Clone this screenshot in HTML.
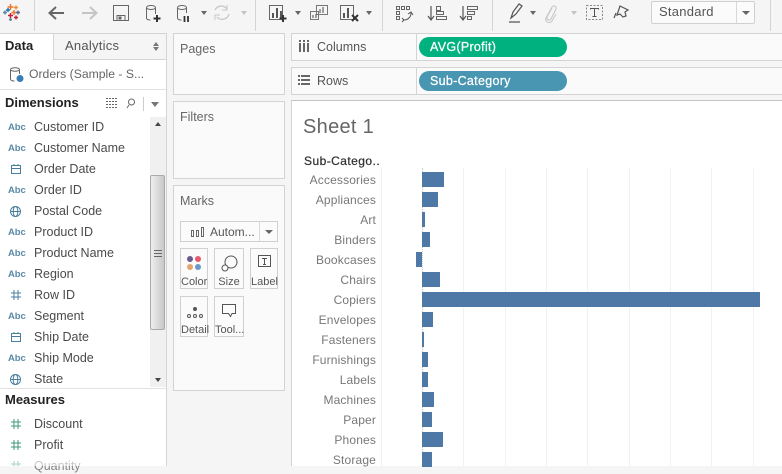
<!DOCTYPE html>
<html><head><meta charset="utf-8"><style>
html,body{margin:0;padding:0}
html{background:#f5f5f5}
body{width:782px;height:466px;overflow:hidden;position:relative;background:#f5f5f5;font-family:"Liberation Sans",sans-serif;color:#555}
div,span,svg{position:absolute;box-sizing:border-box}
.t{white-space:nowrap;font-size:12.5px;line-height:16px;letter-spacing:0}
.p{background:#fafafa;border:1px solid #d4d4d4}
.f{left:34px;color:#4a4a4a}
.ab{left:8px;font-size:9.5px;font-weight:bold;color:#5a8aa5;line-height:12px;white-space:nowrap;letter-spacing:-.1px}
.sep{width:1px;background:#d4d4d4;top:0;height:31px}
.btn{background:#fbfbfb;border:1px solid #d0d0d0}
.lbl{font-size:11px;color:#555;white-space:nowrap;text-align:center;left:0;right:0;line-height:13px;letter-spacing:0}
.r{white-space:nowrap;font-size:12px;color:#777;right:406px;line-height:14px;letter-spacing:.15px}
.b{background:#4e79a7;height:15px}
.g{background:#f1f1f1;width:1px;top:168px;height:298px}
.d{width:0;height:0;border-left:3px solid transparent;border-right:3px solid transparent;border-top:4px solid #666}
.dl{border-top-color:#c4c4c4}
.pill{width:148px;height:20px;border-radius:10px;color:#fff;padding-left:11px;line-height:20px;font-size:12.5px;letter-spacing:.3px;-webkit-text-stroke:.25px #fff}
</style></head><body>

<!-- toolbar -->
<svg style="left:0;top:0" width="782" height="32" fill="none">
<g stroke-width="1.4">
<g stroke="#e8762c"><path d="M10.500 4v6M7.500 7h6"/></g>
<path d="M10.500 13v5M8 15.500h5" stroke="#c72035"/>
<path d="M5 10.500v4M3 12.500h4" stroke="#5b879b"/>
<path d="M16 5.500v4M14 7.500h4" stroke="#eb912b"/>
<path d="M16 15.500v4M14 17.500h4" stroke="#c72035"/>
<path d="M14 10v5M11.500 12.500h5" stroke="#e8762c"/>
<path d="M18 10.500v4M16 12.500h4" stroke="#5b6591"/>
<path d="M8 8v4M6 10h4" stroke="#1f77b4"/>
<path d="M10.500 18v3M9 19.500h3" stroke="#5b879b"/>
</g>
<path d="M64 13H50m6-6-6.500 6 6.500 6" stroke="#666" stroke-width="2"/>
<path d="M82 13h14m-6-6 6.500 6-6.500 6" stroke="#c4c4c4" stroke-width="2"/>
<path d="M113.500 5.500h15v15h-15zM117 20.500v-5h8v5" stroke="#666" stroke-width="1"/>
<rect x="118.500" y="16.500" width="3" height="3" fill="#666"/>
<ellipse cx="151" cy="7.500" rx="4.500" ry="2" stroke="#666"/><path d="M146.500 8v10c0 1.500 2 2 4 2M155.500 8v6" stroke="#666"/>
<path d="M157 15v7M153.500 18.500h7" stroke="#333" stroke-width="2"/>
<ellipse cx="182" cy="7.500" rx="4.500" ry="2" stroke="#666"/><path d="M177.500 8v10c0 1.500 2 2 4 2M186.500 8v5" stroke="#666"/>
<path d="M184.500 16v6M188 16v6" stroke="#333" stroke-width="1.800"/>
<path d="M215 10a7 7 0 0 1 12-1M229 14a7 7 0 0 1-12 3" stroke="#c8c8c8" stroke-width="1.300"/><path d="M227 5v5h-5M215 20v-5h5" stroke="#c8c8c8"/>
<path d="M269.500 5.500h13v14h-13z" stroke="#666"/><path d="M273 18v-5M277 18V8M281 18v-7" stroke="#555" stroke-width="2"/>
<path d="M283 15v7M279.500 18.500h7" stroke="#333" stroke-width="2"/>
<path d="M316.500 5.500h11v9h-11zM310.500 11.500h8v8h-8z" stroke="#777"/><path d="M320 13v-4M323 13V7M313 18v-3M316 18v-4" stroke="#666" stroke-width="1.200"/>
<path d="M340.500 5.500h13v14h-13z" stroke="#666"/><path d="M344 18v-5M348 18V8" stroke="#555" stroke-width="2"/>
<path d="M352 15l6 6m0-6-6 6" stroke="#333" stroke-width="2"/>
<path d="M396.500 6.500h3v3h-3zM401.500 6.500h3v3h-3zM406.500 6.500h3v3h-3zM396.500 11.500h3v3h-3zM396.500 16.500h3v3h-3z" stroke="#666"/>
<path d="M411 13c0 4-3 7-7 7M408 14l3-2 2 3M402 18l2 2-2 2" stroke="#555"/>
<path d="M431 6v13M428 16l3 4 3-4" stroke="#555" stroke-width="1.200"/><path d="M436.500 6.500h4v4h-4zM436.500 11.500h7v3h-7zM436.500 16.500h10v3h-10z" stroke="#666"/>
<path d="M463 6v13M460 16l3 4 3-4" stroke="#555" stroke-width="1.200"/><path d="M467.500 6.500h10v3h-10zM467.500 11.500h7v3h-7zM467.500 16.500h4v3h-4z" stroke="#666"/>
<path d="M511 18l2-6 6-8 3 2-6 8zM509 22h11" stroke="#555" stroke-width="1.200"/>
<path d="M552 8l-5 9c-1 3 3 4 4 2l5-10c1-3-3-4-4-2l-6 11c-2 4 4 6 6 3l4-7" stroke="#c8c8c8" stroke-width="1.100"/>
<rect x="586.500" y="5.500" width="16" height="14" stroke="#888" stroke-dasharray="2 1.500"/>
<path d="M590.500 9.500v-1h8v1M594.500 8.500v8M592.500 16.500h4" stroke="#555"/>
<path d="M620 6l8 4-3 2 1 4-3 1-3-3-3 1zM616 13l-2 5" stroke="#555" stroke-width="1.200"/>
</svg>
<div class="sep" style="left:34px"></div>
<div class="sep" style="left:255px"></div>
<div class="sep" style="left:382px"></div>
<div class="sep" style="left:492px"></div>
<div class="sep" style="left:770px"></div>
<div class="d" style="left:201px;top:11px"></div>
<div class="d dl" style="left:241px;top:11px"></div>
<div class="d" style="left:295px;top:11px"></div>
<div class="d" style="left:366px;top:11px"></div>
<div class="d" style="left:530px;top:11px"></div>
<div class="d dl" style="left:571px;top:11px"></div>
<div class="btn" style="left:651px;top:1px;width:104px;height:23px;border-radius:2px"></div>
<div style="left:736px;top:2px;width:1px;height:21px;background:#d8d8d8"></div>
<div class="t" style="left:659px;top:4px;font-size:13px;color:#555;letter-spacing:.25px">Standard</div>
<div class="d" style="left:742px;top:11px;border-left-width:4px;border-right-width:4px;border-top-width:4px"></div>

<!-- left panel -->
<div style="left:0;top:33px;width:167px;height:433px;background:#fff;border-top:1px solid #d4d4d4;border-right:1px solid #d4d4d4"></div>
<div style="left:53px;top:34px;width:113px;height:26px;background:#f5f5f5;border-left:1px solid #d4d4d4;border-bottom:1px solid #d4d4d4"></div>
<div class="t" style="left:5px;top:38px;font-weight:bold;color:#222;font-size:13px">Data</div>
<div class="t" style="left:65px;top:38px;font-size:13px;color:#555;letter-spacing:.25px">Analytics</div>
<div style="left:153px;top:42px;width:0;height:0;border-left:3px solid transparent;border-right:3px solid transparent;border-bottom:4px solid #777"></div>
<div style="left:153px;top:47px;width:0;height:0;border-left:3px solid transparent;border-right:3px solid transparent;border-top:4px solid #777"></div>
<svg style="left:9px;top:67px" width="16" height="16" fill="none"><ellipse cx="6" cy="2.500" rx="4.500" ry="1.800" stroke="#666"/><path d="M1.500 3v9c0 1.500 2 2 4 2M10.500 3v4" stroke="#666"/><circle cx="11" cy="11.500" r="3.500" fill="#3a7cb5"/></svg>
<div class="t" style="left:29px;top:66px;color:#666;font-size:12.2px">Orders (Sample - S...</div>
<div style="left:0;top:89px;width:166px;height:1px;background:#e2e2e2"></div>
<div class="t" style="left:5px;top:95px;font-weight:bold;color:#222;font-size:13px">Dimensions</div>
<svg style="left:105px;top:97px" width="48" height="14" fill="none"><path d="M1 1.500h12M1 4.500h12M1 7.500h12M1 10.500h12" stroke="#666" stroke-dasharray="2 1"/><circle cx="26.500" cy="5" r="3" stroke="#666"/><path d="M24 8l-2 3" stroke="#666"/><path d="M38.500 0v14" stroke="#ccc"/></svg>
<div class="d" style="left:151px;top:102px;border-left-width:4px;border-right-width:4px;border-top-width:5px;border-top-color:#777"></div>

<!-- scrollbar -->
<div style="left:150px;top:117px;width:16px;height:270px;background:#f0f0f0"></div>
<div style="left:150px;top:175px;width:15px;height:155px;background:linear-gradient(90deg,#eee,#c8c8c8);border:1px solid #aaa;border-radius:2px"></div>
<div style="left:154px;top:250px;width:8px;height:7px;border-top:1px solid #666;border-bottom:1px solid #666"></div>
<div style="left:154px;top:253px;width:8px;height:1px;background:#666"></div>
<div style="left:155px;top:122px;width:0;height:0;border-left:3.500px solid transparent;border-right:3.500px solid transparent;border-bottom:4px solid #444"></div>
<div class="d" style="left:155px;top:378px;border-left-width:3.500px;border-right-width:3.500px;border-top-color:#444"></div>

<div class="ab" style="top:122px">Abc</div><div class="t f" style="top:119px">Customer ID</div>
<div class="ab" style="top:143px">Abc</div><div class="t f" style="top:140px">Customer Name</div>
<svg style="left:10px;top:163px" width="12" height="12" fill="none" stroke="#4a7f9c"><rect x="1.500" y="2.500" width="9" height="8"/><path d="M1.500 5.500h9M4 1v2M8 1v2"/></svg><div class="t f" style="top:161px">Order Date</div>
<div class="ab" style="top:185px">Abc</div><div class="t f" style="top:182px">Order ID</div>
<svg style="left:9px;top:205px" width="13" height="13" fill="none" stroke="#4a7f9c"><circle cx="6.500" cy="6.500" r="5"/><ellipse cx="6.500" cy="6.500" rx="2.300" ry="5"/><path d="M1.500 6.500h10"/></svg><div class="t f" style="top:203px">Postal Code</div>
<div class="ab" style="top:227px">Abc</div><div class="t f" style="top:224px">Product ID</div>
<div class="ab" style="top:248px">Abc</div><div class="t f" style="top:245px">Product Name</div>
<div class="ab" style="top:269px">Abc</div><div class="t f" style="top:266px">Region</div>
<svg style="left:10px;top:289px" width="12" height="12" fill="none" stroke="#4a7f9c"><path d="M1 4h10M1 8h10M4 1v10M8 1v10"/></svg><div class="t f" style="top:287px">Row ID</div>
<div class="ab" style="top:311px">Abc</div><div class="t f" style="top:308px">Segment</div>
<svg style="left:10px;top:331px" width="12" height="12" fill="none" stroke="#4a7f9c"><rect x="1.500" y="2.500" width="9" height="8"/><path d="M1.500 5.500h9M4 1v2M8 1v2"/></svg><div class="t f" style="top:329px">Ship Date</div>
<div class="ab" style="top:353px">Abc</div><div class="t f" style="top:350px">Ship Mode</div>
<svg style="left:9px;top:373px" width="13" height="13" fill="none" stroke="#4a7f9c"><circle cx="6.500" cy="6.500" r="5"/><ellipse cx="6.500" cy="6.500" rx="2.300" ry="5"/><path d="M1.500 6.500h10"/></svg><div class="t f" style="top:371px">State</div>

<div style="left:0;top:388px;width:166px;height:1px;background:#e2e2e2"></div>
<div class="t" style="left:5px;top:392px;font-weight:bold;color:#222;font-size:13px">Measures</div>
<svg style="left:10px;top:418px" width="12" height="12" fill="none" stroke="#3f9a78"><path d="M1 4h10M1 8h10M4 1v10M8 1v10"/></svg><div class="t f" style="top:416px">Discount</div>
<svg style="left:10px;top:439px" width="12" height="12" fill="none" stroke="#3f9a78"><path d="M1 4h10M1 8h10M4 1v10M8 1v10"/></svg><div class="t f" style="top:437px">Profit</div>
<svg style="left:10px;top:460px" width="12" height="6" fill="none" stroke="#3f9a78"><path d="M1 4h10M4 1v10M8 1v10"/></svg><div class="t f" style="top:458px;color:#888">Quantity</div>
<div style="left:0;top:460px;width:166px;height:6px;background:rgba(255,255,255,.55)"></div>

<!-- cards -->
<div class="p" style="left:173px;top:33px;width:112px;height:62px"></div>
<div class="t" style="left:180px;top:41px;color:#666">Pages</div>
<div class="p" style="left:173px;top:101px;width:112px;height:78px"></div>
<div class="t" style="left:180px;top:109px;color:#666">Filters</div>
<div class="p" style="left:173px;top:185px;width:112px;height:206px"></div>
<div class="t" style="left:180px;top:193px;color:#666">Marks</div>
<div class="btn" style="left:180px;top:221px;width:98px;height:21px"></div>
<div style="left:259px;top:222px;width:1px;height:19px;background:#d8d8d8"></div>
<svg style="left:190px;top:226px" width="16" height="12" fill="none" stroke="#666"><rect x="1.500" y="4.500" width="2" height="6"/><rect x="6.500" y="4.500" width="2" height="6"/><rect x="11.500" y="1.500" width="2" height="9"/></svg>
<div class="t" style="left:210px;top:224px;font-size:12px;color:#555">Autom...</div>
<div class="d" style="left:265px;top:230px;border-left-width:4px;border-right-width:4px;border-top-width:4px"></div>

<div class="btn" style="left:180px;top:248px;width:28px;height:41px"><svg style="left:4px;top:5px" width="20" height="20"><circle cx="5" cy="5" r="3" fill="#6b5a8e"/><circle cx="13" cy="5" r="3" fill="#e8596b"/><circle cx="5" cy="13" r="3" fill="#e3a46f"/><circle cx="13" cy="13" r="3" fill="#6b97c9"/></svg><div class="lbl" style="top:27px">Color</div></div>
<div class="btn" style="left:214px;top:248px;width:30px;height:41px"><svg style="left:5px;top:5px" width="20" height="20" fill="none" stroke="#555"><circle cx="11" cy="8" r="6"/><circle cx="5" cy="14" r="3" fill="#fbfbfb"/></svg><div class="lbl" style="top:27px">Size</div></div>
<div class="btn" style="left:250px;top:248px;width:28px;height:41px"><svg style="left:6px;top:4px" width="16" height="16" fill="none"><rect x="1.500" y="2.500" width="12" height="11" stroke="#555"/><path d="M5 5.500h5M7.500 5.500v6M6 11.500h3" stroke="#555"/></svg><div class="lbl" style="top:27px">Label</div></div>
<div class="btn" style="left:180px;top:296px;width:28px;height:41px"><svg style="left:4px;top:5px" width="20" height="18" fill="none" stroke="#555"><circle cx="10" cy="7" r="1.500" fill="#555"/><circle cx="4" cy="14" r="1.500"/><circle cx="10" cy="14" r="1.500"/><circle cx="16" cy="14" r="1.500"/></svg><div class="lbl" style="top:27px">Detail</div></div>
<div class="btn" style="left:214px;top:296px;width:30px;height:41px"><svg style="left:6px;top:5px" width="18" height="18" fill="none" stroke="#555"><path d="M1.500 2.500h13v9H11l-1.500 3-2-3h-6z"/></svg><div class="lbl" style="top:27px">Tool...</div></div>

<!-- shelves -->
<div class="p" style="left:291px;top:33px;width:495px;height:28px"></div>
<div class="p" style="left:291px;top:67px;width:495px;height:28px"></div>
<div style="left:416px;top:34px;width:1px;height:26px;background:#d4d4d4"></div>
<div style="left:416px;top:68px;width:1px;height:26px;background:#d4d4d4"></div>
<svg style="left:298px;top:39px" width="12" height="14" fill="#666"><rect x="1" y="4" width="2" height="9"/><rect x="5" y="4" width="2" height="9"/><rect x="9" y="4" width="2" height="9"/><rect x="1" y="1" width="2" height="2"/><rect x="5" y="1" width="2" height="2"/><rect x="9" y="1" width="2" height="2"/></svg>
<svg style="left:297px;top:74px" width="14" height="12" fill="#666"><rect x="1" y="1" width="2" height="2"/><rect x="4" y="1" width="9" height="2"/><rect x="1" y="5" width="2" height="2"/><rect x="4" y="5" width="9" height="2"/><rect x="1" y="9" width="2" height="2"/><rect x="4" y="9" width="9" height="2"/></svg>
<div class="t" style="left:317px;top:39px;color:#555">Columns</div>
<div class="t" style="left:317px;top:73px;color:#555">Rows</div>
<div class="t pill" style="left:419px;top:37px;background:#00b180">AVG(Profit)</div>
<div class="t pill" style="left:419px;top:71px;background:#4996b2">Sub-Category</div>

<!-- view -->
<div style="left:291px;top:100px;width:491px;height:366px;background:#fff;border-top:1px solid #c4c4c4;border-left:1px solid #d4d4d4"></div>
<div class="t" style="left:303px;top:115px;font-size:20px;line-height:24px;color:#666;letter-spacing:.3px">Sheet 1</div>
<div class="t" style="left:304px;top:153px;font-size:12px;color:#333;letter-spacing:.45px;-webkit-text-stroke:.25px #333">Sub-Catego..</div>

<div class="g" style="left:381px"></div><div class="g" style="left:463px"></div><div class="g" style="left:505px"></div><div class="g" style="left:546px"></div><div class="g" style="left:587px"></div><div class="g" style="left:629px"></div><div class="g" style="left:670px"></div><div class="g" style="left:711px"></div><div class="g" style="left:753px"></div>
<div style="left:422px;top:168px;width:1px;height:298px;border-left:1px dotted #ccc"></div>

<div class="r" style="top:173px">Accessories</div><div class="b" style="left:422px;top:172px;width:22px"></div>
<div class="r" style="top:193px">Appliances</div><div class="b" style="left:422px;top:192px;width:16px"></div>
<div class="r" style="top:213px">Art</div><div class="b" style="left:422px;top:212px;width:3px"></div>
<div class="r" style="top:233px">Binders</div><div class="b" style="left:422px;top:232px;width:8px"></div>
<div class="r" style="top:253px">Bookcases</div><div class="b" style="left:416px;top:252px;width:6px"></div>
<div class="r" style="top:273px">Chairs</div><div class="b" style="left:422px;top:272px;width:18px"></div>
<div class="r" style="top:293px">Copiers</div><div class="b" style="left:422px;top:292px;width:338px"></div>
<div class="r" style="top:313px">Envelopes</div><div class="b" style="left:422px;top:312px;width:11px"></div>
<div class="r" style="top:333px">Fasteners</div><div class="b" style="left:422px;top:332px;width:2px"></div>
<div class="r" style="top:353px">Furnishings</div><div class="b" style="left:422px;top:352px;width:6px"></div>
<div class="r" style="top:373px">Labels</div><div class="b" style="left:422px;top:372px;width:6px"></div>
<div class="r" style="top:393px">Machines</div><div class="b" style="left:422px;top:392px;width:12px"></div>
<div class="r" style="top:413px">Paper</div><div class="b" style="left:422px;top:412px;width:10px"></div>
<div class="r" style="top:433px">Phones</div><div class="b" style="left:422px;top:432px;width:21px"></div>
<div class="r" style="top:453px">Storage</div><div class="b" style="left:422px;top:452px;width:10px"></div>
</body></html>
